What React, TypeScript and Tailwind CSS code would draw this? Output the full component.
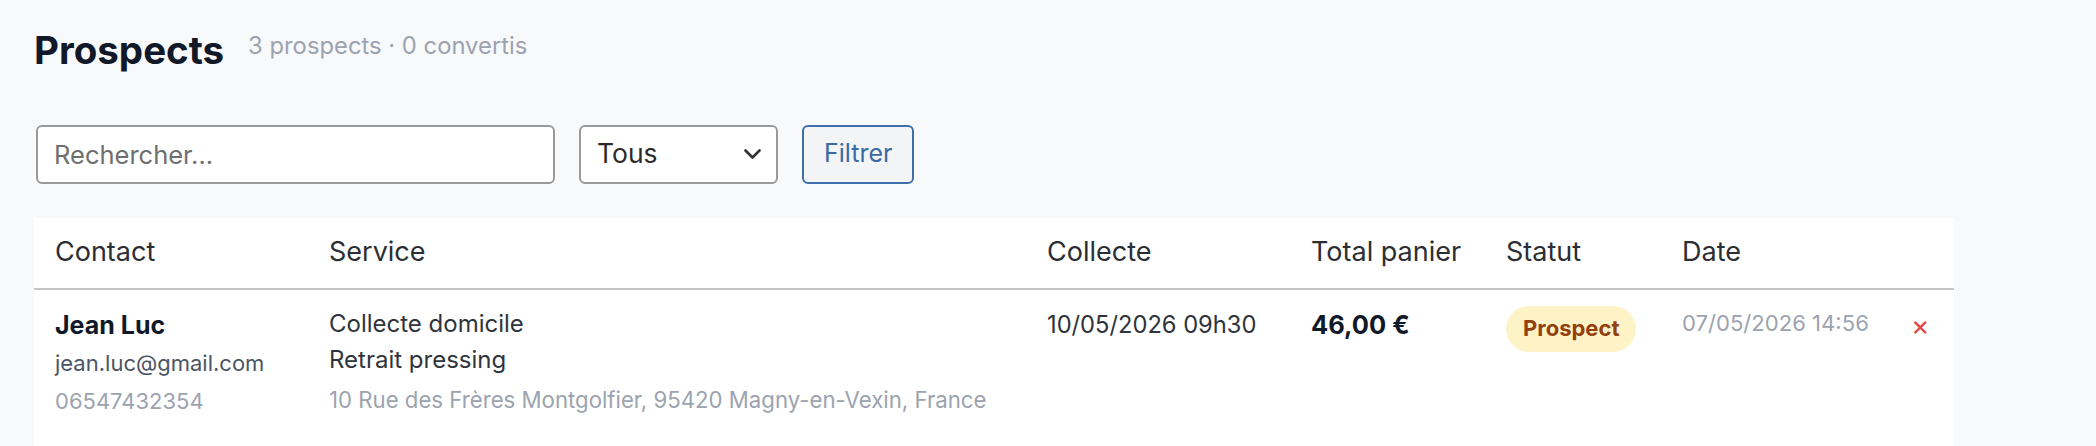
import { useState } from 'react';

type Prospect = {
  id: number;
  name: string;
  email: string;
  phone: string;
  services: string[];
  address: string;
  collecte: string;
  total: string;
  statut: string;
  date: string;
};

const prospects: Prospect[] = [
  {
    id: 1,
    name: 'Jean Luc',
    email: 'jean.luc@gmail.com',
    phone: '06547432354',
    services: ['Collecte domicile', 'Retrait pressing'],
    address: '10 Rue des Frères Montgolfier, 95420 Magny-en-Vexin, France',
    collecte: '10/05/2026 09h30',
    total: '46,00 €',
    statut: 'Prospect',
    date: '07/05/2026 14:56',
  },
];

const columns = [
  { label: 'Contact', width: 'w-[274px]' },
  { label: 'Service', width: 'w-[718px]' },
  { label: 'Collecte', width: 'w-[264px]' },
  { label: 'Total panier', width: 'w-[195px]' },
  { label: 'Statut', width: 'w-[176px]' },
  { label: 'Date', width: 'w-[232px]' },
  { label: '', width: 'w-[61px]' },
];

export default function App() {
  const [query, setQuery] = useState('');
  const [filter, setFilter] = useState('tous');

  return (
    <div className="min-h-screen bg-[#f8f9fb] px-[34px] pt-[28px] font-['Inter',sans-serif]">
      {/* Header */}
      <div className="flex items-center gap-[24px]">
        <h1 className="text-[38.5px] font-bold leading-[44px] text-[#111827]">Prospects</h1>
        <span className="mb-[9px] text-[23.8px] text-[#9ca3af]">3 prospects · 0 convertis</span>
      </div>

      {/* Filters */}
      <div className="ml-[2px] mt-[52px] flex items-center gap-6">
        <input
          type="text"
          value={query}
          onChange={(e) => setQuery(e.target.value)}
          placeholder="Rechercher..."
          className="h-[59px] w-[519px] rounded-[6px] border-2 border-[#9a9a9a] bg-white px-4 text-[25.5px] text-[#222] placeholder:text-[#6f6f6f] focus:outline-none"
        />
        <div className="relative">
          <select
            value={filter}
            onChange={(e) => setFilter(e.target.value)}
            className="h-[59px] w-[199px] appearance-none rounded-[6px] border-2 border-[#9a9a9a] bg-white pl-4 text-[26.5px] text-[#2b2b2b] focus:outline-none"
          >
            <option value="tous">Tous</option>
            <option value="prospect">Prospect</option>
            <option value="converti">Converti</option>
          </select>
          <svg
            className="pointer-events-none absolute right-[17px] top-[24px]"
            width="17"
            height="10"
            viewBox="0 0 17 10"
            fill="none"
          >
            <path d="M1.5 1.5 L8.5 8.5 L15.5 1.5" stroke="#333" strokeWidth="2.6" strokeLinecap="round" strokeLinejoin="round" />
          </svg>
        </div>
        <button className="h-[59px] rounded-[6px] border-2 border-[#3f6fa8] bg-[#f3f4f5] px-[20px] text-[25px] text-[#3a6aa4]">
          Filtrer
        </button>
      </div>

      {/* Table */}
      <div className="mt-[34px] w-[1920px] bg-white">
        <table className="w-full table-fixed border-collapse">
          <thead>
            <tr className="border-b-2 border-[#c4c4c4]">
              {columns.map((c, i) => (
                <th
                  key={i}
                  className={`${c.width} h-[71px] pl-[21px] pr-2 text-left align-middle text-[27px] font-normal text-[#2b2e33]`}
                >
                  {c.label}
                </th>
              ))}
            </tr>
          </thead>
          <tbody>
            {prospects.map((p) => (
              <tr key={p.id} className="align-top">
                <td className="pb-[30px] pl-[21px] pr-2 pt-4">
                  <div className="text-[25px] font-bold leading-[38px] text-[#111827]">{p.name}</div>
                  <div className="text-[22px] leading-[38px] text-[#4b5563]">{p.email}</div>
                  <div className="text-[22px] leading-[38px] text-[#9ca3af]">{p.phone}</div>
                </td>
                <td className="pl-[21px] pr-2 pt-4">
                  {p.services.map((s) => (
                    <div key={s} className="text-[24px] leading-[36px] text-[#2f343d]">
                      {s}
                    </div>
                  ))}
                  <div className="mt-[3px] text-[22.2px] leading-[38px] text-[#9ca3af]">{p.address}</div>
                </td>
                <td className="pl-[21px] pr-2 pt-4 text-[23.7px] leading-[38px] text-[#2f343d]">{p.collecte}</td>
                <td className="pl-[21px] pr-2 pt-4 text-[25.5px] font-bold leading-[38px] text-[#111827]">{p.total}</td>
                <td className="pl-[21px] pr-2 pt-4">
                  <span className="inline-flex h-[46px] items-center rounded-full bg-[#fef3c7] px-[17px] text-[22px] font-bold text-[#92400e]">
                    {p.statut}
                  </span>
                </td>
                <td className="pl-[21px] pr-2 pt-[14px] text-[22.1px] leading-[38px] text-[#9ca3af]">{p.date}</td>
                <td className="pl-[21px] pr-2 pt-4">
                  <button className="-ml-[3px] text-[28px] leading-[38px] text-[#e04848]" title="Supprimer">
                    ×
                  </button>
                </td>
              </tr>
            ))}
          </tbody>
        </table>
      </div>
    </div>
  );
}
